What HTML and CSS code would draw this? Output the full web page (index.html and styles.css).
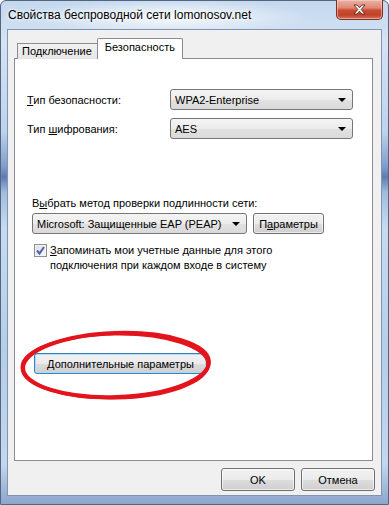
FILE: index.html
```html
<!DOCTYPE HTML>
<html>
<head>
    <title>Свойства беспроводной сети lomonosov.net</title>
    <meta charset="utf-8" />
    <link rel="stylesheet" href="styles.css">
</head>
<body>

<div class="window">
    <!-- Title bar -->
    <div class="titlebar">
        <span class="title">Свойства беспроводной сети lomonosov.net</span>
        <button class="close-btn">
            <svg width="13" height="11" viewBox="0 0 13 11">
                <path d="M1 1h3.2l2.3 2.8 2.3-2.8h3.2l-3.8 4.5 3.8 4.5h-3.2l-2.3-2.8-2.3 2.8h-3.2l3.8-4.5z" fill="#fff" stroke="#5a2216" stroke-width="0.9"/>
            </svg>
        </button>
    </div>

    <div class="client">
        <!-- Tabs -->
        <div class="tabs">
            <div class="tab">Подключение</div>
            <div class="tab active">Безопасность</div>
        </div>

        <div class="panel">
            <div class="field-grid">
                <span class="label"><u>Т</u>ип безопасности:</span>
                <div class="combo">WPA2-Enterprise</div>
                <span class="label">Тип <u>ш</u>ифрования:</span>
                <div class="combo">AES</div>
            </div>

            <div class="auth">
                <p class="auth-title">В<u>ы</u>брать метод проверки подлинности сети:</p>
                <div class="auth-row">
                    <div class="combo combo-eap">Microsoft: Защищенные EAP (PEAP)</div>
                    <button class="btn btn-params">П<u>а</u>раметры</button>
                </div>
                <div class="check-row">
                    <span class="checkbox">
                        <svg width="11" height="11" viewBox="0 0 11 11">
                            <path d="M2 5.5l2.5 3 4.5-6.5" fill="none" stroke="#4a64ad" stroke-width="2"/>
                        </svg>
                    </span>
                    <span class="check-text"><u>З</u>апоминать мои учетные данные для этого<br>подключения при каждом входе в систему</span>
                </div>
            </div>

            <div class="advanced">
                <button class="btn btn-focus"><u>Д</u>ополнительные параметры</button>
                <!-- red marker drawn over the screenshot -->
                <svg class="marker" width="199" height="73" viewBox="0 0 199 73">
                    <ellipse cx="98" cy="36" rx="93" ry="32" fill="none" stroke="#e3141c" stroke-width="4" transform="rotate(-2 98 36)"/>
                    <ellipse cx="97" cy="37" rx="93" ry="32" fill="none" stroke="#e3141c" stroke-width="3" transform="rotate(-1 97 37)"/>
                </svg>
            </div>
        </div>

        <div class="footer">
            <button class="btn btn-dialog">OK</button>
            <button class="btn btn-dialog">Отмена</button>
        </div>
    </div>
</div>

</body>
</html>
```

FILE: styles.css
```css
/* Base */
body {
    margin: 0;
    width: 389px;
    height: 505px;
    overflow: hidden;
    font-family: "Liberation Sans", Arial, sans-serif;
    font-size: 11px;
    color: #000;
    background: #fff;
}

u {
    text-decoration: underline;
    text-underline-offset: 1px;
}

/* Window frame */
.window {
    box-sizing: border-box;
    width: 389px;
    height: 505px;
    display: flex;
    flex-direction: column;
    border: 1px solid #52667f;
    border-radius: 6px 6px 0 0;
    background: linear-gradient(180deg, #c4d8ee 0%, #d4e3f4 8%, #bdd3ec 26%, #7f9ccc 33%, #5d7bb0 35%, #9fbbdf 38%, #c6dbef 45%, #b6cde8 70%, #c3d7ed 92%, #8aa6cc 100%);
}

/* Title bar */
.titlebar {
    height: 28px;
    display: flex;
    align-items: flex-start;
    padding: 0 5px 0 7px;
    background: radial-gradient(ellipse 140px 18px at 170px 16px, rgba(255,255,255,0.85), rgba(255,255,255,0));
}

.title {
    font-size: 12px;
    line-height: 28px;
    color: #000;
    text-shadow: 0 0 6px #fff, 0 0 3px #fff;
}

.close-btn {
    margin-left: auto;
    margin-top: -1px;
    width: 47px;
    height: 20px;
    padding: 0;
    display: flex;
    align-items: center;
    justify-content: center;
    border: 1px solid #7c2f22;
    border-top: none;
    border-radius: 0 0 5px 5px;
    background: linear-gradient(180deg, #eab2a6 0%, #de8a77 40%, #c94a2f 55%, #c0432a 80%, #d8745c 100%);
    box-shadow: inset 0 0 0 1px rgba(255,220,210,0.5);
}

/* Client area */
.client {
    flex: 1;
    margin: 0 6px 8px 6px;
    display: flex;
    flex-direction: column;
    padding: 8px 8px 4px 6px;
    background: #f0f0f0;
    border: 1px solid #8194b0;
}

/* Tabs */
.tabs {
    display: flex;
    align-items: flex-end;
    height: 20px;
    padding-left: 3px;
    position: relative;
    z-index: 1;
}

.tab {
    height: 15px;
    line-height: 15px;
    padding: 0 5px 0 4px;
    border: 1px solid #898c95;
    border-bottom: none;
    border-right: none;
    background: linear-gradient(180deg, #f2f2f2, #e6e6e6);
    margin-bottom: -1px;
}

.tab.active {
    height: 20px;
    line-height: 17px;
    padding: 0 7px 0 7px;
    border-right: 1px solid #898c95;
    background: #fff;
    border-radius: 2px 2px 0 0;
    margin-bottom: -1px;
}

.panel {
    flex: 1;
    background: #fff;
    border: 1px solid #898c95;
    display: flex;
    flex-direction: column;
}

/* Security type fields */
.field-grid {
    display: grid;
    grid-template-columns: 143px 183px;
    row-gap: 8px;
    align-items: center;
    padding: 30px 0 0 12px;
}

.combo {
    box-sizing: border-box;
    height: 21px;
    display: flex;
    align-items: center;
    padding: 0 4px;
    border: 1px solid #767676;
    border-radius: 3px;
    background: linear-gradient(180deg, #f4f4f4 0%, #ececec 50%, #e1e1e1 51%, #dadada 100%);
    position: relative;
}

.combo::after {
    content: "";
    position: absolute;
    right: 6px;
    top: 8px;
    border-left: 4px solid transparent;
    border-right: 4px solid transparent;
    border-top: 4px solid #000;
}

/* Authentication method */
.auth {
    padding-left: 17px;
    margin-top: 57px;
}

.auth-title {
    margin: 0;
    line-height: 15px;
}

.auth-row {
    display: flex;
    gap: 6px;
    margin-top: 2px;
}

.combo-eap {
    width: 215px;
}

.btn {
    box-sizing: border-box;
    font-family: inherit;
    font-size: 11px;
    color: #000;
    padding: 0;
    border: 1px solid #707070;
    border-radius: 3px;
    background: linear-gradient(180deg, #f2f2f2 0%, #ebebeb 50%, #dddddd 51%, #cfcfcf 100%);
    box-shadow: inset 0 0 0 1px rgba(255,255,255,0.6);
}

.btn-params {
    width: 71px;
    height: 21px;
}

.check-row {
    display: flex;
    align-items: flex-start;
    gap: 3px;
    margin-top: 9px;
    padding-left: 2px;
}

.checkbox {
    box-sizing: border-box;
    width: 13px;
    height: 13px;
    margin-top: 1px;
    display: flex;
    align-items: center;
    justify-content: center;
    border: 1px solid #8e8f8f;
    background: linear-gradient(135deg, #dcdcdc, #fbfbfb);
    box-shadow: inset 0 0 0 1px #f4f4f4;
}

.check-text {
    line-height: 15px;
}

/* Advanced settings */
.advanced {
    position: relative;
    margin: 80px 0 0 19px;
    width: 173px;
}

.btn-focus {
    display: block;
    width: 173px;
    height: 21px;
    border-color: #3c7fb1;
    box-shadow: inset 0 0 0 1px #a7dff6;
}

.marker {
    position: absolute;
    left: -16px;
    top: -24px;
}

/* Dialog buttons */
.footer {
    display: flex;
    justify-content: flex-end;
    gap: 6px;
    margin: 7px -2px 0 0;
}

.btn-dialog {
    width: 74px;
    height: 23px;
}
```
